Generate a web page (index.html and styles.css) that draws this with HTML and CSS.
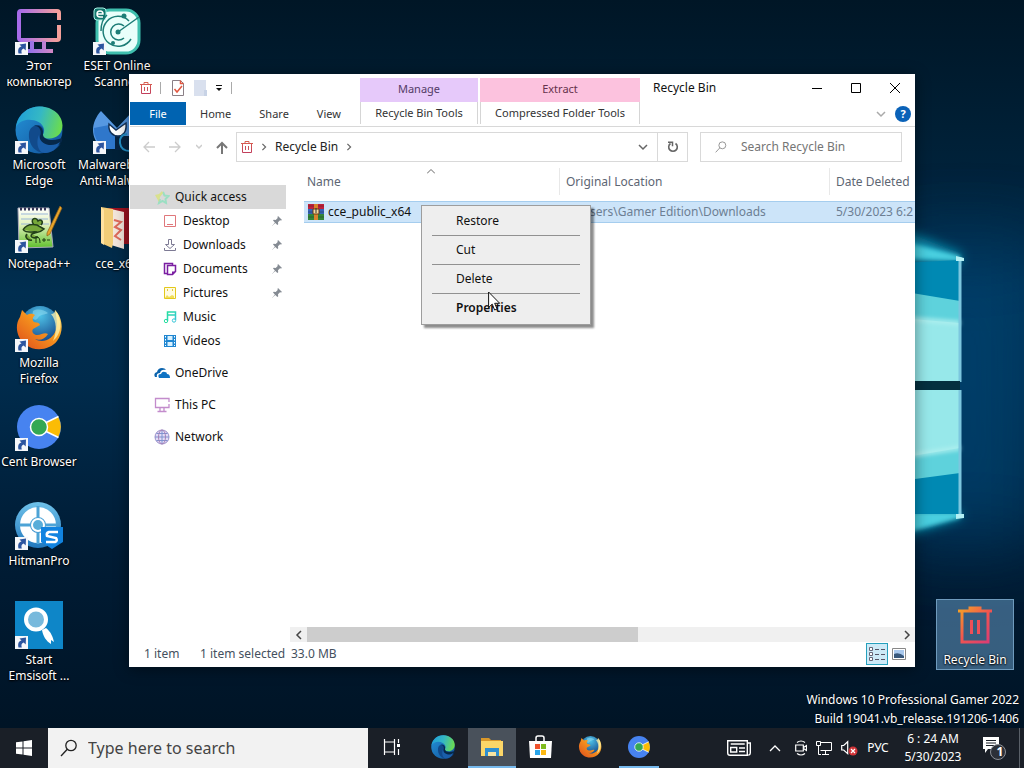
FILE: index.html
```
<!DOCTYPE html>
<html lang="en">
<head>
<meta charset="utf-8">
<title>Recycle Bin</title>
<link rel="stylesheet" href="styles.css">
</head>
<body>
<svg class="defs" width="0" height="0" aria-hidden="true">
  <defs>
    <linearGradient id="gPc" x1="0" x2="1"><stop offset="0" stop-color="#a66bea"/><stop offset="1" stop-color="#f5a09a"/></linearGradient>
    <linearGradient id="gPcFoot" x1="0" x2="1"><stop offset="0" stop-color="#8a6df0"/><stop offset="1" stop-color="#d488c4"/></linearGradient>
    <linearGradient id="gBin" x1="0" y1="0" x2="1" y2="1"><stop offset="0" stop-color="#f5a623"/><stop offset=".5" stop-color="#f0554f"/><stop offset="1" stop-color="#d93a78"/></linearGradient>
    <linearGradient id="gBinSmall" x1="0" y1="0" x2="0" y2="1"><stop offset="0" stop-color="#d9604f"/><stop offset="1" stop-color="#c23f5c"/></linearGradient>
    <linearGradient id="gEdgeTop" x1="0" x2="1" y1=".3" y2=".5"><stop offset="0" stop-color="#1f9fd8"/><stop offset=".5" stop-color="#35b8c4"/><stop offset="1" stop-color="#6bdc4e"/></linearGradient>
    <linearGradient id="gEdgeMid" x1="0" y1="0" x2="1" y2="1"><stop offset="0" stop-color="#2493d8"/><stop offset="1" stop-color="#11519a"/></linearGradient>
    <linearGradient id="gFox" x1="1" y1="0" x2="0" y2="1"><stop offset="0" stop-color="#fff08a"/><stop offset=".35" stop-color="#f9a01e"/><stop offset="1" stop-color="#dd4a1c"/></linearGradient>
    <radialGradient id="gGlobe" cx=".5" cy=".25" r=".7"><stop offset="0" stop-color="#4fc3e8"/><stop offset="1" stop-color="#174a8c"/></radialGradient>
    <linearGradient id="gNpp" x1="0" y1="0" x2="0" y2="1"><stop offset="0" stop-color="#fff"/><stop offset=".4" stop-color="#e4f3c0"/><stop offset="1" stop-color="#5fbf2c"/></linearGradient>
    <linearGradient id="gHit" x1="0" y1="0" x2="0" y2="1"><stop offset="0" stop-color="#6fc2ea"/><stop offset="1" stop-color="#2278bd"/></linearGradient>
    <linearGradient id="gMusic" x1="0" y1="0" x2="1" y2="1"><stop offset="0" stop-color="#25dfa0"/><stop offset="1" stop-color="#36c6d8"/></linearGradient>
  </defs>
  <symbol id="edge" viewBox="0 0 48 48">
    <circle cx="24" cy="24" r="23.500" fill="url(#gEdgeMid)"/>
    <path d="M1 21C3 8 13 .5 25 .5c13 0 22.500 9 22.500 19 0 8-6 13-13 13-5 0-7.500-1.500-7-3.500 3-3 2-10-4-13C16 12 5 13 1 21z" fill="url(#gEdgeTop)"/>
    <path d="M14 27c-1 11 6 20 16 20 6 0 12-4 15.500-9-6 3-13 2.500-17-1-4-3.500-4-7-1-9 2-3 1-8-4-9-5 0-9 3-9.500 8z" fill="#114a8b"/>
    <path d="M28 29c1-6-3-11-9-9 6-1 8 6 6 10-1 5 3 10 10 11 4 0 8-1 10-3q3-3 2-6l-3 1c-7 2-15 1-16-4z" fill="#06284a"/>
    <path d="M24 29c0 5 4 9 10 10 5 .5 8-1 11-3-3 7-9 11-15 11-8 0-9-13-6-18z" fill="#1a5eaa"/>
  </symbol>
  <symbol id="fox" viewBox="0 0 48 48">
    <circle cx="25" cy="21" r="19" fill="url(#gGlobe)"/>
    <path d="M18 7c5-3 11-1 15 2-3 2-8 1-10 5-2 3-5 2-6-1z" fill="#8fdaf0" opacity=".55"/>
    <path d="M40 6c8 8 9 22 2 31-7 9-22 11-31 4C2 35-1 22 5 13L7 6l5 5c3-2 6-1 8 0-3 3-3 5-1 7 3 1 5 0 6 3l-7 4c-2 3 1 6 4 6 5 0 7-3 11-1-3 5-8 7-13 5 8 5 18 0 21-9 2-8 0-14-1-20z" fill="url(#gFox)"/>
    <path d="M40 6c8 10 7 24-2 31 4-9 4-20-2-27 3 0 4-2 4-4z" fill="#fff6b0" opacity=".75"/>
  </symbol>
  <symbol id="cent" viewBox="0 0 48 48">
    <circle cx="24" cy="24" r="22" fill="#4783f0"/>
    <path d="M26 22 43 13.500A22 22 0 0 1 43 34.500L26 26z" fill="#fbbc05"/>
    <path d="M43.500 13.500 26 22M43.500 34.500 26 26" stroke="#fff" stroke-width="1.500"/>
    <circle cx="24" cy="24" r="8.500" fill="#34a853" stroke="#fff" stroke-width="1.500"/>
  </symbol>
  <symbol id="bin" viewBox="0 0 36 38">
    <path d="M1 5h34M13 5V2h10v3M5 5v31h26V5" fill="none" stroke="url(#gBin)" stroke-width="3"/>
    <path d="M14.500 14v14M21.500 14v14" stroke="#ee4f58" stroke-width="3" fill="none"/>
  </symbol>
  <symbol id="binSmall" viewBox="0 0 12 12">
    <path d="M0 2.500h12M4 2V.5h4V2M1.500 2.500v9h9v-9" fill="none" stroke="url(#gBinSmall)"/>
    <path d="M4.500 5v4M7.500 5v4" stroke="#c9525a" fill="none"/>
  </symbol>
  <symbol id="cut" viewBox="0 0 13 13">
    <path d="M0 0h13v13H0z" fill="#f5f7fa"/>
    <path d="M3.500 11.500C2.500 7.500 4 5 6.500 4.600L4.500 2.500 11 1.500l-.3 7-2-2C6.500 7 6 9 6.800 11.500z" fill="#2c559f"/>
  </symbol>
  <symbol id="chev" viewBox="0 0 10 10"><path d="M1 3l4 4 4-4" fill="none" stroke="currentColor" stroke-width="1.500"/></symbol>
  <symbol id="next" viewBox="0 0 10 10"><path d="M3 1l4 4-4 4" fill="none" stroke="currentColor" stroke-width="1.500"/></symbol>
  <symbol id="lens" viewBox="0 0 18 18"><circle cx="11" cy="6.500" r="5.200" fill="none" stroke="currentColor" stroke-width="1.300"/><path d="M7.300 10.200 1 17" stroke="currentColor" stroke-width="1.300"/></symbol>
  <symbol id="pin" viewBox="0 0 12 12"><path d="M7 1l4 4-1 .5-1-.2-2 2 .2 2L6.400 10 4.300 7.900 1 11l2.900-3.600L2 5.500l.7-.8 2 .2 2-2L6.500 2z" fill="#858b93"/></symbol>
</svg>

<main class="desktop">
  <svg class="wallpaper" viewBox="0 0 1024 768" preserveAspectRatio="none" aria-hidden="true">
    <defs>
      <filter id="soft" x="-50%" y="-50%" width="200%" height="200%"><feGaussianBlur stdDeviation="6"/></filter>
      <filter id="slight" x="-20%" y="-40%" width="140%" height="180%"><feGaussianBlur stdDeviation="2"/></filter>
      <filter id="wide" x="-80%" y="-50%" width="260%" height="200%"><feGaussianBlur stdDeviation="40"/></filter>
      <linearGradient id="sky" x1="0" y1="0" x2="0" y2="1"><stop offset="0" stop-color="#001626"/><stop offset=".22" stop-color="#00223a"/><stop offset=".38" stop-color="#002e50"/><stop offset=".5" stop-color="#002b4c"/><stop offset=".72" stop-color="#001c35"/><stop offset="1" stop-color="#001222"/></linearGradient>
    </defs>
    <path fill="url(#sky)" d="M0 0h1024v768H0z"/>
    <path d="M890 250h150v290H890z" fill="#004472" opacity=".75" filter="url(#wide)"/>
    <path d="M880 222l82 32-3 10H880zM880 512h80l3 5-83 26z" fill="#0d93b2" filter="url(#soft)"/>
    <path d="M900 241l60 15v5l-60-3zM900 512h60v6l-60 16z" fill="#48cfe0" filter="url(#slight)"/>
    <path d="M900 263l60-3v122h-60zM900 390h60v124h-60z" fill="#0089b3"/>
    <path d="M900 291l60 10v81h-60zM900 390h60v83l-60 8z" fill="#5ed2dc"/>
    <path d="M900 318l60 5v58h-60zM900 390h60v58l-60 10z" fill="#97e8ea"/>
    <path d="M900 318l60 5M900 457l60-9" stroke="#b0f0ef" stroke-width="4" filter="url(#slight)"/>
    <path d="M960 257v125M960 390v128" stroke="#7cc6de" stroke-width="3"/>
    <path d="M956 256l8 2v3h-8zM956 514h8v4l-8 1z" fill="#b4f1f5"/>
    <path d="M900 381h60v9h-60z" fill="#04303f"/>
  </svg>

  <div class="icons">
    <a class="shortcut" href="#pc"><span class="pic"><svg viewBox="0 0 48 48"><path d="M44 13V6q0-2-2-2H6Q4 4 4 6v25q0 2 2 2h36q2 0 2-2V18" fill="none" stroke="url(#gPc)" stroke-width="4"/><path d="M17 34v10M29 34v10M10 44h28" fill="none" stroke="url(#gPcFoot)" stroke-width="4"/></svg><svg class="badge"><use href="#cut"/></svg></span><span class="label">Этот компьютер</span></a>
    <a class="shortcut" href="#edge"><span class="pic"><svg><use href="#edge"/></svg><svg class="badge"><use href="#cut"/></svg></span><span class="label">Microsoft Edge</span></a>
    <a class="shortcut" href="#npp"><span class="pic"><svg viewBox="0 0 48 48"><path d="M3 3h31l4 39-34 1z" fill="url(#gNpp)" stroke="#aab" stroke-width="1"/><path d="M6 9h27M6 14h27M6 19h28" stroke="#9ab6d8"/><path d="M5 4h2M9 4h2M13 4h2M17 4h2M21 4h2M25 4h2M29 4h2" stroke="#335" stroke-width="3"/><path d="M8 25c3-5 9-6 14-5l7 4c-4 4-8 3-12 5-3 3 2 5 6 3M8 25c5 4 9 1 14 2M19 20c-5-6 2-9 4-4 3-3 6 1 3 4M12 29c-3 3 1 7 5 6" fill="#77a83a" stroke="#23401a" stroke-width="1.500"/><path d="M21 31v7M21 32q4-1 4 6M27 35h4M29 33v4M32 35h3" stroke="#1d3d12" fill="none"/><path d="M45 1l2 2-12 26-3 2 0-3z" fill="#e7a52b" stroke="#8d5a18" stroke-width=".7"/></svg><svg class="badge"><use href="#cut"/></svg></span><span class="label">Notepad++</span></a>
    <a class="shortcut" href="#fox"><span class="pic"><svg><use href="#fox"/></svg><svg class="badge"><use href="#cut"/></svg></span><span class="label">Mozilla Firefox</span></a>
    <a class="shortcut" href="#cent"><span class="pic"><svg><use href="#cent"/></svg><svg class="badge"><use href="#cut"/></svg></span><span class="label">Cent Browser</span></a>
    <a class="shortcut" href="#hitman"><span class="pic"><svg viewBox="0 0 48 48"><circle cx="23" cy="23" r="23" fill="url(#gHit)"/><circle cx="23" cy="23" r="13" fill="none" stroke="#fff" stroke-width="10"/><path d="M23 4v12M4 23h12M30 23h12M23 30v12" stroke="#4da3d6" stroke-width="3"/><circle cx="23" cy="23" r="6" fill="#58add9" stroke="#fff" stroke-width="2"/><path d="M26 25h22v15q-5 3-11 7-6-4-11-7z" fill="#1183e0"/><path d="M43 30H34q-3 1-2 4l9 2q2 3-1 4h-9" fill="none" stroke="#fff" stroke-width="2.500"/></svg><svg class="badge"><use href="#cut"/></svg></span><span class="label">HitmanPro</span></a>
    <a class="shortcut" href="#emsi"><span class="pic"><svg viewBox="0 0 48 48"><path d="M0 0h48v48H0z" fill="#0e86c8"/><circle cx="21" cy="18.500" r="10" fill="#78b9dc" stroke="#fff" stroke-width="4"/><path d="M27 29l4-2c5 4 7 9 8 14l-3-2 0 4c-5-3-8-8-9-14z" fill="#fff"/></svg><svg class="badge"><use href="#cut"/></svg></span><span class="label">Start Emsisoft ...</span></a>
    <a class="shortcut" href="#eset"><span class="pic"><svg viewBox="0 0 48 48"><rect x="4" y="3" width="42" height="43" rx="13" fill="#e9fffb" stroke="#3fbfae" stroke-width="3"/><rect x="1" y="1" width="12" height="12" rx="3" fill="#12766d" stroke="#a8f2e6"/><path d="M4 7h6q0-3-3-3T4 7t3 3h3" fill="none" stroke="#fff" stroke-width="1.500"/><path d="M36 14A15 15 0 1 0 38 32M31 19a8 8 0 1 0 0 12M25 25 46 10M14 8Q8 13 8 24" fill="none" stroke="#1d7d77" stroke-width="1.500"/><circle cx="25" cy="25" r="2.500" fill="#1d7d77"/><circle cx="31" cy="9" r="2.500" fill="#1d7d77"/><circle cx="20" cy="36" r="2" fill="#1d7d77"/></svg><svg class="badge"><use href="#cut"/></svg></span><span class="label">ESET Online Scanner</span></a>
    <a class="shortcut" href="#mbam"><span class="pic"><svg viewBox="0 0 48 48"><path d="M8 5 24 22 40 5v38H10C-4 32-2 16 8 5z" fill="#5698e2"/><path d="M1 22l15-3 8 9-2 15H12Q0 34 1 22z" fill="#2f77cb"/><path d="M22 30h18v14H22z" fill="#062340"/><path d="M16 18l7 6 10-7c1 9-3 13-8 13s-10-4-9-12z" fill="#fff" stroke="#143257" stroke-width="1.500"/><path d="M34 28q-8 1-7 9t10 8" fill="none" stroke="#2290c8" stroke-width="2"/></svg><svg class="badge"><use href="#cut"/></svg></span><span class="label">Malwarebytes Anti-Malware</span></a>
    <a class="shortcut" href="#cce"><span class="pic"><svg viewBox="0 0 48 48"><path d="M15 3h30v36H15z" fill="#9d1320"/><path d="M18 4l13 3v37l-13-4z" fill="#f3e6dc"/><path d="M21 15l7 2-6 5 6 3-6 6 6 4" fill="none" stroke="#de6a5b" stroke-width="2"/><path d="M8 2l12 2v34l-1 5-11-5z" fill="#f1cd78"/><path d="M8 2l3 3v35l-3-2z" fill="#ffe2a0"/></svg></span><span class="label">cce_x64</span></a>
  </div>

  <a class="shortcut trash" href="#bin"><span class="pic"><svg viewBox="-6 0 48 48"><use href="#bin" x="0" y="0" width="36" height="38"/></svg></span><span class="label">Recycle Bin</span></a>

  <div class="watermark"><p>Windows 10 Professional Gamer 2022</p><p>Build 19041.vb_release.191206-1406</p></div>

  <section class="window" aria-label="Recycle Bin">
    <header class="top">
      <div class="top-left">
        <div class="quick">
          <svg class="i12"><use href="#binSmall"/></svg><span class="bar"></span>
          <button aria-label="Properties"><svg viewBox="0 0 14 16" width="14" height="16"><path d="M1.500.5h8l3 3v12h-11z" fill="#fff" stroke="#8a7f86"/><path d="M9.500.5v3h3M3.500 9l2.500 3 5-6" fill="none" stroke="#e2563f" stroke-width="1.500"/></svg></button>
          <button aria-label="New folder"><svg viewBox="0 0 14 16" width="14" height="16"><path d="M1 0h12v16H1z" fill="#d9e0ee"/><path d="M11 10h3v6h-3z" fill="#c8d3e6"/></svg></button>
          <button aria-label="Customize"><svg viewBox="0 0 8 8" width="8" height="8"><path d="M1 1.500h6" stroke="#111"/><path d="M1 4h6L4 7z" fill="#111"/></svg></button>
          <span class="bar"></span>
        </div>
        <nav class="tabs"><button class="file">File</button><button>Home</button><button>Share</button><button>View</button></nav>
      </div>
      <div class="context manage"><span class="group">Manage</span><button>Recycle Bin Tools</button></div>
      <div class="context extract"><span class="group">Extract</span><button>Compressed Folder Tools</button></div>
      <div class="top-right">
        <div class="title"><h1>Recycle Bin</h1>
          <div class="controls">
            <button aria-label="Minimize"><svg viewBox="0 0 10 10"><path d="M0 5.500h10" stroke="#000"/></svg></button>
            <button aria-label="Maximize"><svg viewBox="0 0 10 10"><path d="M.5.5h9v9h-9z" fill="none" stroke="#000"/></svg></button>
            <button aria-label="Close"><svg viewBox="0 0 10 10"><path d="M0 0l10 10M10 0 0 10" stroke="#000"/></svg></button>
          </div></div>
        <div class="help"><button class="dim" aria-label="Expand ribbon"><svg class="i10"><use href="#chev"/></svg></button><button class="ask" aria-label="Help">?</button></div>
      </div>
    </header>

    <div class="nav">
      <div class="arrows">
        <button class="off" aria-label="Back"><svg viewBox="0 0 12 12" width="12" height="12"><path d="M12 6H1M6 1 1 6l5 5" fill="none" stroke="currentColor" stroke-width="1.300"/></svg></button>
        <button class="off" aria-label="Forward"><svg viewBox="0 0 12 12" width="12" height="12"><path d="M0 6h11M6 1l5 5-5 5" fill="none" stroke="currentColor" stroke-width="1.300"/></svg></button>
        <button class="off" aria-label="Recent"><svg viewBox="0 0 6 6" width="6" height="6"><path d="M0 1l3 3 3-3" fill="none" stroke="currentColor" stroke-width="1.500"/></svg></button>
        <button aria-label="Up"><svg viewBox="0 0 12 13" width="12" height="13"><path d="M6 13V2M1 7l5-5 5 5" fill="none" stroke="currentColor" stroke-width="2"/></svg></button>
      </div>
      <div class="address"><svg class="i12"><use href="#binSmall"/></svg><svg class="i8"><use href="#next"/></svg><span>Recycle Bin</span><svg class="i8"><use href="#next"/></svg>
        <button class="drop" aria-label="Previous locations"><svg class="i10"><use href="#chev"/></svg></button>
        <button class="reload" aria-label="Refresh"><svg viewBox="0 0 12 12" width="12" height="12"><path d="M8.500 2.500a4.300 4.300 0 1 1-5 0" fill="none" stroke="currentColor" stroke-width="1.600"/><path d="M1 1.200h4.500v4" fill="none" stroke="currentColor" stroke-width="1.500"/></svg></button>
      </div>
      <label class="find"><svg class="i12"><use href="#lens"/></svg><input type="search" placeholder="Search Recycle Bin" aria-label="Search Recycle Bin"></label>
    </div>

    <div class="body">
      <nav class="side">
        <a class="item root on" href="#quick"><svg viewBox="0 0 16 16"><path d="M9 3l1.500 3.500 4 .5-3 3 .5 4-3.500-2L5 14l1-4" fill="none" stroke="#8be0bd" stroke-width="2" opacity=".8"/><path d="M1 6l4-1 3-3 1 2-3 4-1 5z" fill="#d8e27a" opacity=".8"/></svg><span>Quick access</span></a>
        <a class="item" href="#desktop"><svg viewBox="0 0 14 14"><path d="M1.500 1.500h11v11h-11zM4 10.500h6" fill="none" stroke="#e0777b"/></svg><span>Desktop</span><svg class="pin"><use href="#pin"/></svg></a>
        <a class="item" href="#downloads"><svg viewBox="0 0 14 14"><path d="M5.500 1.500h3M5.500 1.500v5h-3L7 10.500l4.500-4h-3v-5M1.500 10v2.500h11V10" fill="none" stroke="#7d7a94"/></svg><span>Downloads</span><svg class="pin"><use href="#pin"/></svg></a>
        <a class="item" href="#documents"><svg viewBox="0 0 14 14"><path d="M4 11.500H1.500v-10h8V3M4.500 3.500h8v6l-3 3h-5z" fill="none" stroke="#7b1fa2" stroke-width="1.500"/><path d="M9 13V9.500h3.500z" fill="#7b1fa2"/></svg><span>Documents</span><svg class="pin"><use href="#pin"/></svg></a>
        <a class="item" href="#pictures"><svg viewBox="0 0 14 14"><path d="M1.500 1.500h11v11h-11z" fill="#fffbe0" stroke="#e3c81c"/><path d="M2 12l2-3 2 2 3-2 2 1v2z" fill="#f0dd58"/><path d="M4 4h1M9 4h1" stroke="#e0c83a" stroke-width="2"/></svg><span>Pictures</span><svg class="pin"><use href="#pin"/></svg></a>
        <a class="item" href="#music"><svg viewBox="0 0 14 14"><path d="M4.500 11V2h8v8M4.500 5h8" fill="none" stroke="url(#gMusic)" stroke-width="1.500"/><circle cx="3" cy="11" r="1.700" fill="none" stroke="#25dfa0"/><circle cx="11" cy="10.500" r="1.700" fill="none" stroke="#36c6d8"/></svg><span>Music</span></a>
        <a class="item" href="#videos"><svg viewBox="0 0 14 14"><path d="M1 1h12v12H1z" fill="#1f86d1"/><path d="M4.500 2h5v4h-5zM4.500 8h5v4h-5z" fill="#d9f1ff"/><path d="M2.500 2v10M11.500 2v10" stroke="#fff" stroke-dasharray="1.500 1.500"/></svg><span>Videos</span></a>
        <a class="item root apart" href="#onedrive"><svg viewBox="0 0 16 16"><path d="M1 12q-2-4 2-5 1-4 5-4 3 0 4 2-5-1-6 3-4 0-3 4z" fill="#0a63ad"/><path d="M5 13q-2-4 2-4 1-3 4-2 2 0 2 2 3 0 3 4z" fill="#0f73c4"/></svg><span>OneDrive</span></a>
        <a class="item root apart" href="#thispc"><svg viewBox="0 0 16 16"><path d="M15 5V1.500H1.500v9H15V7M6 11v3M10 11v3M3.500 14.500h9" fill="none" stroke="#c38ccc" stroke-width="1.300"/></svg><span>This PC</span></a>
        <a class="item root apart" href="#network"><svg viewBox="0 0 16 16"><circle cx="8" cy="8" r="7" fill="#e3dcf6" stroke="#9b8dc8"/><path d="M1 8h14M8 1v14M2.500 4.500h11M2.500 11.500h11" stroke="#7f93cf"/><ellipse cx="8" cy="8" rx="3.500" ry="7" fill="none" stroke="#a783b8"/></svg><span>Network</span></a>
      </nav>

      <div class="pane">
        <div class="list">
          <table>
            <thead><tr><th class="c-name">Name<svg class="sort" viewBox="0 0 8 5"><path d="M0 4.500l4-4 4 4" fill="none" stroke="#666"/></svg></th><th class="c-loc">Original Location</th><th>Date Deleted</th></tr></thead>
            <tbody><tr><td class="name"><span class="file-name"><svg viewBox="0 0 16 16"><path d="M0 0h16v5H0z" fill="#c0203c"/><path d="M0 5h16v5H0z" fill="#3463b8"/><path d="M0 10h16v6H0z" fill="#31853a"/><path d="M0 2h16M0 8h16M0 13h16" stroke="#222" stroke-width=".6" opacity=".6"/><path d="M6 0h4v16H6z" fill="#d9822b"/><path d="M5 5h6v5H5z" fill="#f3d9a0" stroke="#6a3a14"/><path d="M8 4v5" stroke="#333"/></svg>cce_public_x64</span></td><td>C:\Users\Gamer Edition\Downloads</td><td>5/30/2023 6:2</td></tr></tbody>
          </table>
          <div class="menu" role="menu">
            <button role="menuitem">Restore</button><hr>
            <button role="menuitem">Cut</button><hr>
            <button role="menuitem">Delete</button><hr>
            <button role="menuitem" class="strong">Properties</button>
            <svg class="cursor" viewBox="0 0 13 20"><path d="M.6 1v15.500l3.600-3.400L6.600 19l2.500-1-2.400-5.700h5z" fill="#fff" stroke="#111"/></svg>
          </div>
        </div>
        <div class="scroll"><button aria-label="Scroll left"><svg class="flip i10"><use href="#next"/></svg></button><div class="track"><div class="thumb"></div></div><button aria-label="Scroll right"><svg class="i10"><use href="#next"/></svg></button></div>
      </div>
    </div>

    <footer class="status"><span class="count">1 item</span><span class="chosen">1 item selected</span><span class="size">33.0 MB</span>
      <div class="views">
        <button class="on" aria-label="Details"><svg viewBox="0 0 16 14" width="16" height="14"><path d="M.5.5h3v3h-3zM.5 5.500h3v3h-3zM.5 10.500h3v3h-3z" fill="#fff" stroke="#667"/><path d="M6 2.500h4M12 2.500h4M6 7.500h4M12 7.500h4M6 12.500h4M12 12.500h4" stroke="#556"/></svg></button>
        <button aria-label="Large icons"><svg viewBox="0 0 14 12" width="14" height="12"><path d="M.5.5h13v11H.5z" fill="#fff" stroke="#888"/><path d="M2 2h10v8H2z" fill="#a9c9ee"/><path d="M2 6q5-2 10 2v2H2z" fill="#38587c"/></svg></button>
      </div>
    </footer>
  </section>
</main>

<footer class="taskbar">
  <button class="start" aria-label="Start"><svg viewBox="0 0 16 16" width="16" height="16"><path d="M0 2.300 6.500 1.400v6.100H0zM7.500 1.200 16 0v7.500H7.500zM0 8.500h6.500v6.100L0 13.700zM7.500 8.500H16V16l-8.500-1.200z" fill="#fff"/></svg></button>
  <label class="search"><svg viewBox="0 0 18 18"><use href="#lens"/></svg><input type="search" placeholder="Type here to search" aria-label="Type here to search"></label>
  <button class="task" aria-label="Task View"><svg viewBox="0 0 18 16" width="18" height="16"><path d="M1.500 0v3h10V0M1.500 16v-3h10v3M1.500 3v10M11.500 3v10M15.500 0v4M15.500 10v6" fill="none" stroke="#fff" stroke-width="1.200"/><path d="M14 5h3v3h-3z" fill="#fff"/></svg></button>
  <div class="apps">
    <button class="task" aria-label="Edge"><svg class="i24"><use href="#edge"/></svg></button>
    <button class="task active" aria-label="File Explorer"><svg class="i24" viewBox="0 0 24 24"><path d="M1 3h8l2 2h10v3H1z" fill="#d9982a"/><path d="M1 6h22v15H1z" fill="#fbd668"/><path d="M5 13h14v8h-3v-4H8v4H5z" fill="#2f8fd0"/><path d="M8 17h8v4H8z" fill="#f7e3a0"/></svg></button>
    <button class="task" aria-label="Store"><svg class="i24" viewBox="0 0 24 24"><path d="M0 6h23l-1 17H1z" fill="#fff"/><path d="M7 6V3q0-2 2-2h4q2 0 2 2v3" fill="none" stroke="#fff" stroke-width="1.500"/><path d="M6 9h5v5H6z" fill="#f0522d"/><path d="M12 9h5v5h-5z" fill="#7fbb1e"/><path d="M6 15h5v5H6z" fill="#2aa5ea"/><path d="M12 15h5v5h-5z" fill="#fcb813"/></svg></button>
    <button class="task" aria-label="Firefox"><svg class="i24"><use href="#fox"/></svg></button>
    <button class="task running" aria-label="Cent Browser"><svg class="i24"><use href="#cent"/></svg></button>
  </div>
  <div class="tray">
    <button class="news" aria-label="News"><svg viewBox="0 0 24 16" width="24" height="16"><path d="M.7.700h19.600v14.600H3Q.7 15.300.7 13zM20.300 3h3v10q0 2-2 2.300" fill="none" stroke="#fff" stroke-width="1.400"/><path d="M3.700 4h14M3.700 7.500h6v4.500h-6zM12 8h6M12 11.500h6" fill="none" stroke="#fff" stroke-width="1.400"/></svg></button>
    <button class="more" aria-label="Show hidden icons"><svg viewBox="0 0 12 8" width="12" height="8"><path d="M1 7l5-5 5 5" fill="none" stroke="#fff" stroke-width="1.300"/></svg></button>
    <button class="meet" aria-label="Meet Now"><svg viewBox="0 0 12 16" width="12" height="16"><path d="M.7 5h7.600v6H.7zM8.500 7.500l3-2v5l-3-2M2 2.500q4-3 8 0M2 13.500q4 3 8 0" fill="none" stroke="#fff" stroke-width="1.200"/></svg></button>
    <button class="net" aria-label="Network"><svg viewBox="0 0 16 14" width="16" height="14"><path d="M5 1.500h10.500v8H4.500M9.500 10v3M6 13.500h7M.5.500h4v4h-4zM2.500 5v8.500H5" fill="none" stroke="#fff"/></svg></button>
    <button class="vol" aria-label="Muted"><svg viewBox="0 0 17 16" width="17" height="16"><path d="M.7 5.500h2l4-3.800v12l-4-3.700h-2z" fill="none" stroke="#fff" stroke-width="1.200"/><circle cx="12" cy="11" r="4.500" fill="#d13438"/><path d="M10 9l4 4M14 9l-4 4" stroke="#fff" stroke-width="1.200"/></svg></button>
    <button class="lang">РУС</button>
    <button class="clock"><span>6 : 24 AM</span><span>5/30/2023</span></button>
    <button class="notes" aria-label="1 notification"><svg viewBox="0 0 24 24" width="24" height="24"><path d="M1 1h16v12H6l-3 4v-4H1z" fill="#fff"/><path d="M4 4.500h10M4 7h10M4 9.500h8" stroke="#1b2028"/><circle cx="16" cy="16" r="7.500" fill="#2c3038" stroke="#8c9096"/></svg><b>1</b></button>
    <button class="peek" aria-label="Show desktop"></button>
  </div>
</footer>
</body>
</html>
```
FILE: styles.css
```
* { box-sizing: border-box; }
body {
  margin: 0;
  height: 100vh;
  display: flex;
  flex-direction: column;
  overflow: hidden;
  background: #001222;
  font: 12px/16px "Noto Sans", "Open Sans", sans-serif;
  color: #111;
}
button {
  font: inherit;
  color: inherit;
  background: none;
  border: 0;
  padding: 0;
  display: flex;
  align-items: center;
  justify-content: center;
}
input { font: inherit; border: 0; background: none; padding: 0; outline: 0; min-width: 0; flex: 1; }
a { color: inherit; text-decoration: none; }
p, h1 { margin: 0; font: inherit; }
svg { flex: none; }
.defs { position: absolute; }
.i8 { width: 8px; height: 8px; }
.i10 { width: 10px; height: 10px; }
.i12 { width: 12px; height: 12px; }
.i24 { width: 24px; height: 24px; }
.flip { transform: scaleX(-1); }

/* Desktop */
.desktop { position: relative; flex: 1; min-height: 0; }
.wallpaper { position: absolute; top: 0; left: 0; width: 100%; height: 100vh; }
.icons {
  position: relative;
  display: grid;
  grid-auto-flow: column;
  grid-template-rows: repeat(7, 99px);
  grid-auto-columns: 78px;
  justify-content: start;
}
.shortcut {
  display: flex;
  flex-direction: column;
  align-items: center;
  gap: 3px;
  padding-top: 7px;
  color: #fff;
  text-align: center;
  text-shadow: 0 1px 2px #000, 0 0 2px #000;
}
.pic { position: relative; width: 48px; height: 48px; }
.pic svg { display: block; width: 48px; height: 48px; }
.pic .badge { position: absolute; left: 0; bottom: 0; width: 13px; height: 13px; }
.label { max-width: 78px; }
.trash {
  position: absolute;
  right: 10px;
  bottom: 58px;
  width: 78px;
  height: 71px;
  padding-top: 6px;
  gap: 0;
  background: rgba(110, 165, 210, .5);
  border: 1px solid #6f9bbd;
}
.trash .pic { height: 46px; }
.watermark {
  position: absolute;
  right: 5px;
  bottom: 0;
  color: #fff;
  text-align: right;
  line-height: 19px;
  text-shadow: 0 0 2px #000;
}

/* Window */
.window {
  position: absolute;
  top: 74px;
  left: 129px;
  right: 109px;
  bottom: 61px;
  display: flex;
  flex-direction: column;
  padding-left: 1px;
  background: #fff;
  box-shadow: 0 2px 14px rgba(0, 0, 0, .45);
}
.top { display: flex; gap: 2px; height: 53px; border-bottom: 1px solid #d8d8d8; font-size: 11px; color: #333; }
.top-left { width: 228px; }
.quick { display: flex; align-items: center; gap: 8px; height: 28px; padding-left: 10px; }
.bar { width: 1px; height: 12px; background: #aaa; }
.bar:nth-child(2) { margin-right: 2px; }
.tabs { display: flex; height: 23px; }
.tabs button { padding: 0 14px; }
.tabs .file { width: 56px; padding: 0; background: #0063b1; color: #fff; }
.context { display: flex; flex-direction: column; padding-top: 4px; }
.context .group { height: 24px; line-height: 22px; text-align: center; }
.context button { flex: 1; border: solid #d5d5d5; border-width: 0 1px; margin-bottom: 2px; }
.manage { width: 118px; }
.manage .group { background: #e6c9fa; color: #533b66; }
.extract { width: 160px; }
.extract .group { background: #fcc2de; color: #66334c; }
.top-right { flex: 1; min-width: 0; }
.title { display: flex; align-items: center; height: 28px; padding-left: 11px; font-size: 12px; color: #111; }
.controls { display: flex; margin-left: auto; padding-right: 1px; }
.controls button { width: 39px; height: 28px; }
.controls svg { width: 10px; height: 10px; }
.help { display: flex; align-items: center; justify-content: flex-end; gap: 9px; height: 24px; padding-right: 4px; }
.dim { color: #aaa; }
.ask { width: 16px; height: 16px; border-radius: 50%; background: #0a62b8; color: #fff; font-weight: 700; }

.nav { display: flex; height: 41px; padding: 5px 13px 6px 12px; }
.arrows { display: flex; align-items: center; justify-content: space-between; width: 94px; padding: 0 8px 0 1px; color: #777; }
.arrows .off { color: #ccc; }
.address { display: flex; flex: 1; align-items: center; gap: 7px; padding-left: 4px; border: 1px solid #d9d9d9; color: #666; }
.address span { color: #222; }
.drop { width: 28px; margin-left: auto; }
.reload { align-self: stretch; width: 30px; margin-left: -7px; border-left: 1px solid #d9d9d9; }
.find { display: flex; align-items: center; gap: 14px; width: 202px; margin-left: 12px; padding-left: 14px; border: 1px solid #d9d9d9; color: #888; }
.find input::placeholder { color: #757575; opacity: 1; }

.body { display: flex; flex: 1; min-height: 0; }
.side { width: 160px; padding: 17px 4px 0 0; }
.item { display: flex; align-items: center; gap: 6px; height: 24px; padding-left: 33px; }
.item > svg { width: 14px; height: 14px; }
.item .pin { width: 12px; height: 12px; margin-left: auto; margin-right: 3px; }
.item.root { gap: 5px; padding-left: 24px; }
.item.root > svg { width: 16px; height: 16px; }
.item.apart { margin-top: 8px; }
.item.on { background: #d9d9d9; }

.pane { display: flex; flex: 1; flex-direction: column; min-width: 0; }
.list { position: relative; flex: 1; padding-left: 14px; overflow: hidden; }
table { width: 100%; table-layout: fixed; border-collapse: separate; border-spacing: 0; }
th, td { padding: 0 0 0 6px; text-align: left; font-weight: 400; white-space: nowrap; }
th { position: relative; height: 27px; color: #5d6673; border-right: 1px solid #e8e8e8; }
th:last-child { border: 0; }
.c-name { width: 256px; padding-left: 3px; }
.c-loc { width: 270px; }
.sort { position: absolute; left: 123px; top: 1px; width: 8px; height: 5px; }
tbody::before { content: ""; display: block; height: 6px; }
td { height: 22px; background: #cce4f9; border: solid #a5cdee; border-width: 1px 0; color: #6c7f94; }
td.name { padding-left: 4px; color: #111; }
.file-name { display: flex; align-items: center; gap: 4px; }
.file-name svg { width: 16px; height: 16px; }

.menu {
  position: absolute;
  left: 131px;
  top: 37px;
  width: 170px;
  padding-top: 1px;
  padding-bottom: 2px;
  background: #eee;
  border: 1px solid #9d9d9d;
  box-shadow: 3px 3px 2px rgba(0, 0, 0, .45);
}
.menu button { width: 100%; height: 28px; padding-left: 34px; justify-content: flex-start; }
.menu hr { height: 1px; margin: 0 10px; border: 0; background: #919191; }
.menu .strong { font-weight: 600; }
.cursor { position: absolute; left: 66px; top: 85px; width: 13px; height: 20px; }

.scroll { display: flex; height: 15px; background: #f0f0f0; color: #444; }
.scroll button { width: 17px; }
.track { flex: 1; }
.thumb { width: 56%; height: 15px; background: #cdcdcd; }

.status { display: flex; align-items: center; height: 25px; padding: 0 5px 2px 14px; color: #44505e; }
.count { width: 56px; }
.chosen { width: 91px; }
.views { display: flex; margin-left: auto; }
.views button { width: 22px; height: 22px; }
.views .on { background: #cdeaf7; border: 1px solid #26a0bd; }

/* Taskbar */
.taskbar { position: relative; display: flex; height: 40px; background: #1a1f27; color: #fff; }
.start { width: 48px; }
.search { display: flex; align-items: center; gap: 10px; width: 320px; padding-left: 12px; background: #f2f2f2; color: #222; font-size: 16px; line-height: 24px; }
.search svg { width: 18px; height: 18px; }
.search input::placeholder { color: #444; opacity: 1; }
.task { width: 48px; height: 40px; border-bottom: 2px solid transparent; }
.apps { display: flex; gap: 1px; margin-left: 3px; }
.active { background: #49515b; border-bottom-color: #76b9ed; }
.running { background: linear-gradient(#76b9ed, #76b9ed) center bottom / 40px 2px no-repeat border-box; }
.tray { display: flex; align-items: center; margin-left: auto; }
.news { width: 32px; }
.more { width: 40px; }
.meet { width: 12px; }
.net { width: 34px; }
.vol { width: 17px; }
.lang { width: 40px; }
.clock { width: 70px; flex-direction: column; line-height: 18px; }
.notes { position: relative; width: 51px; height: 40px; }
.notes b { position: absolute; left: 25px; top: 16px; width: 14px; line-height: 16px; text-align: center; }
.peek { width: 5px; height: 40px; border-left: 1px solid #5a6068; }
```
